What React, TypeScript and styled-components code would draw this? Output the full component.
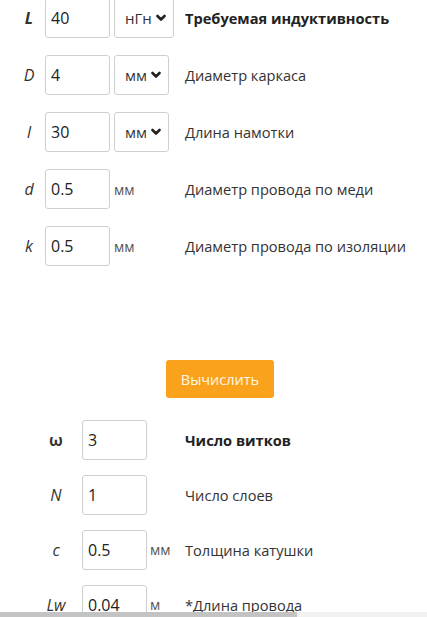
import React from 'react'
import styled, { createGlobalStyle } from 'styled-components'

const Global = createGlobalStyle`
  html, body { margin: 0; padding: 0; background: #fff; }
  body {
    font-family: "Open Sans", "Liberation Sans", sans-serif;
    color: #333;
    overflow: hidden;
  }
`

type Row = {
  sym: string
  value: string
  unit?: string
  select?: boolean
  text: string
  bold?: boolean
}

const inputs: Row[] = [
  { sym: 'L', value: '40', unit: 'нГн', select: true, text: 'Требуемая индуктивность', bold: true },
  { sym: 'D', value: '4', unit: 'мм', select: true, text: 'Диаметр каркаса' },
  { sym: 'l', value: '30', unit: 'мм', select: true, text: 'Длина намотки' },
  { sym: 'd', value: '0.5', unit: 'мм', text: 'Диаметр провода по меди' },
  { sym: 'k', value: '0.5', unit: 'мм', text: 'Диаметр провода по изоляции' },
]

const results: Row[] = [
  { sym: 'ω', value: '3', text: 'Число витков', bold: true },
  { sym: 'N', value: '1', text: 'Число слоев' },
  { sym: 'c', value: '0.5', unit: 'мм', text: 'Толщина катушки' },
  { sym: 'Lw', value: '0.04', unit: 'м', text: '*Длина провода' },
]

const Chevron = () => (
  <svg width="10" height="8" viewBox="0 0 10 8">
    <path d="M1.5 2 L5 5.5 L8.5 2" fill="none" stroke="#222" strokeWidth="2.6" strokeLinecap="round" strokeLinejoin="round" />
  </svg>
)

const App = () => {
  return (
    <Page>
      <Global />
      <InputGrid>
        {inputs.map((r) => (
          <React.Fragment key={r.sym}>
            <Sym bold={r.bold}>{r.sym}</Sym>
            <Field>{r.value}</Field>
            {r.select ? (
              <Select>
                <span>{r.unit}</span>
                <Chevron />
              </Select>
            ) : (
              <Unit>{r.unit}</Unit>
            )}
            <Desc bold={r.bold}>{r.text}</Desc>
          </React.Fragment>
        ))}
      </InputGrid>

      <ButtonRow>
        <Button>Вычислить</Button>
      </ButtonRow>

      <ResultGrid>
        {results.map((r) => (
          <React.Fragment key={r.sym}>
            <ResSym bold={r.bold}>{r.sym}</ResSym>
            <Field>{r.value}</Field>
            <ResUnit>{r.unit}</ResUnit>
            <Desc bold={r.bold}>{r.text}</Desc>
          </React.Fragment>
        ))}
      </ResultGrid>

      <Scrollbar>
        <Thumb />
      </Scrollbar>
    </Page>
  )
}

export default App

const Page = styled.div`
  width: 427px;
  height: 617px;
  overflow: hidden;
  position: relative;
`
const InputGrid = styled.div`
  display: grid;
  grid-template-columns: 45px 69px 71px 1fr;
  grid-auto-rows: 40px;
  row-gap: 17px;
  align-items: center;
  margin-top: -2px;
`
const Sym = styled.div<{ bold?: boolean }>`
  font-style: italic;
  font-weight: ${(p) => (p.bold ? 700 : 400)};
  font-size: 16px;
  color: #333;
  text-align: center;
  padding-left: 13px;
`
const Field = styled.div`
  box-sizing: border-box;
  width: 65px;
  height: 40px;
  border: 1px solid #cfcfcf;
  border-radius: 3px;
  padding-left: 5px;
  display: flex;
  align-items: center;
  font-size: 16px;
  color: #222;
`
const Select = styled.div`
  box-sizing: border-box;
  height: 40px;
  width: fit-content;
  min-width: 52px;
  border: 1px solid #cfcfcf;
  border-radius: 3px;
  padding: 0 7px 0 10px;
  display: flex;
  align-items: center;
  gap: 4px;
  font-size: 15px;
  color: #333;
`
const Unit = styled.div`
  font-size: 14px;
  color: #555;
  padding-left: 0;
`
const Desc = styled.div<{ bold?: boolean }>`
  font-size: 14.6px;
  font-weight: ${(p) => (p.bold ? 700 : 400)};
  color: ${(p) => (p.bold ? '#222' : '#333')};
  white-space: nowrap;
`
const ButtonRow = styled.div`
  display: flex;
  padding-left: 166px;
  margin-top: 94px;
`
const Button = styled.button`
  width: 108px;
  height: 38px;
  border: none;
  border-radius: 3px;
  background: #fba21c;
  color: #fff7e6;
  font-family: "Open Sans", "Liberation Sans", sans-serif;
  font-size: 14.5px;
  cursor: pointer;
`
const ResultGrid = styled.div`
  display: grid;
  grid-template-columns: 82px 68px 35px 1fr;
  grid-auto-rows: 39px;
  row-gap: 16px;
  align-items: center;
  margin-top: 22px;
`
const ResSym = styled.div<{ bold?: boolean }>`
  font-style: ${(p) => (p.bold ? 'normal' : 'italic')};
  font-weight: ${(p) => (p.bold ? 700 : 400)};
  font-size: 16px;
  color: #333;
  text-align: center;
  padding-left: 30px;
`
const ResUnit = styled.div`
  font-size: 14px;
  color: #555;
`
const Scrollbar = styled.div`
  position: absolute;
  left: 0;
  right: 0;
  bottom: 0;
  height: 5px;
  background: #f1f1f1;
`
const Thumb = styled.div`
  width: 297px;
  height: 100%;
  background: #c3c3c3;
`
